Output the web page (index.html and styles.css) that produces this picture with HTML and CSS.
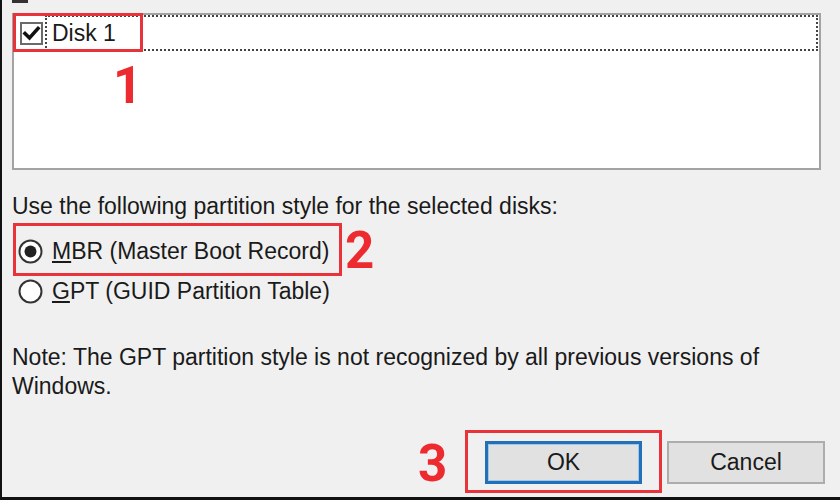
FILE: index.html
```html
<!DOCTYPE html>
<html>
<head>
<meta charset="utf-8">
<link rel="stylesheet" href="styles.css">
</head>
<body>
<div class="page">
  <div class="dash"></div>
  <div class="listbox">
    <div class="item">
      <svg class="check" width="23" height="23" viewBox="0 0 23 23">
        <rect x="1" y="1" width="21" height="21" fill="#fff" stroke="#6a6a6a" stroke-width="2"/>
        <path d="M5 11.5 L9.5 16 L18 6.5" fill="none" stroke="#111" stroke-width="3.6" stroke-linecap="square" stroke-linejoin="miter"/>
      </svg>
      <div class="focus"><span class="label">Disk 1</span></div>
    </div>
  </div>

  <div class="prompt">Use the following partition style for the selected disks:</div>

  <div class="options">
    <div class="opt">
      <svg class="radio" width="25" height="25" viewBox="0 0 25 25">
        <circle cx="12.5" cy="12.5" r="11" fill="#fff" stroke="#333" stroke-width="2"/>
        <circle cx="12.5" cy="12.5" r="6" fill="#222"/>
      </svg>
      <span class="opt-text"><u>M</u>BR (Master Boot Record)</span>
    </div>
    <div class="opt">
      <svg class="radio" width="25" height="25" viewBox="0 0 25 25">
        <circle cx="12.5" cy="12.5" r="11" fill="#fff" stroke="#333" stroke-width="2"/>
      </svg>
      <span class="opt-text"><u>G</u>PT (GUID Partition Table)</span>
    </div>
  </div>

  <p class="note">Note: The GPT partition style is not recognized by all previous versions of<br>Windows.</p>

  <div class="buttons">
    <button class="btn btn-default">OK</button>
    <button class="btn">Cancel</button>
  </div>

  <div class="mark mark-1"></div>
  <div class="mark mark-2"></div>
  <div class="mark mark-3"></div>
  <span class="num num-1">1</span>
  <span class="num num-2">2</span>
  <span class="num num-3">3</span>
</div>
</body>
</html>
```

FILE: styles.css
```css
html, body {
  margin: 0;
  padding: 0;
}

body {
  background: #f0f0f0;
  font-family: "Liberation Sans", Arial, sans-serif;
  color: #1a1a1a;
}

.page {
  position: relative;
  width: 840px;
  height: 500px;
  box-sizing: border-box;
  padding-left: 12px;
  background: #f0f0f0;
  box-shadow: inset 2px -3px 0 #111;
  overflow: hidden;
}

.dash {
  width: 16px;
  height: 3px;
  background: #333;
}

.listbox {
  margin-top: 10px;
  width: 809px;
  height: 157px;
  box-sizing: border-box;
  border: 2px solid #a3a3a3;
  background: #fff;
}

.item {
  display: flex;
  align-items: stretch;
  height: 36px;
}

.check {
  margin: 7px 2px 0 6px;
  flex: none;
}

.focus {
  flex: 1;
  margin-right: 1px;
  border: 2px dotted #444;
  display: flex;
  align-items: center;
  padding-left: 5px;
}

.label {
  font-size: 23px;
}

.prompt {
  margin-top: 24px;
  font-size: 23px;
  line-height: 24px;
}

.options {
  margin-top: 13px;
}

.opt {
  display: flex;
  align-items: center;
  height: 40px;
}

.radio {
  margin-left: 6px;
  margin-right: 9px;
  flex: none;
}

.opt-text {
  font-size: 23px;
}

.note {
  margin: 32px 0 0;
  font-size: 23px;
  line-height: 29px;
}

.buttons {
  margin-top: 40px;
  margin-right: 15px;
  display: flex;
  justify-content: flex-end;
  gap: 25px;
}

.btn {
  width: 158px;
  height: 43px;
  box-sizing: border-box;
  background: #e1e1e1;
  border: 2px solid #adadad;
  font-family: "Liberation Sans", Arial, sans-serif;
  font-size: 23px;
  color: #1a1a1a;
  padding: 0;
}

.btn-default {
  width: 157px;
  border: 3px solid #2470b8;
  box-shadow: inset 0 0 0 1px #9cc8ec;
}

.mark {
  position: absolute;
  box-sizing: border-box;
  border: 3px solid #e8333a;
}

.mark-1 { left: 13px; top: 13px; width: 130px; height: 39px; }
.mark-2 { left: 13px; top: 223px; width: 329px; height: 53px; }
.mark-3 { left: 465px; top: 430px; width: 197px; height: 63px; }

.num {
  position: absolute;
  font-family: Roboto, sans-serif;
  font-weight: 700;
  font-size: 51px;
  line-height: 40px;
  color: #ed2a2f;
}

.num-1 { left: 113px; top: 66px; }
.num-2 { left: 345px; top: 231px; }
.num-3 { left: 418px; top: 444px; }
```
